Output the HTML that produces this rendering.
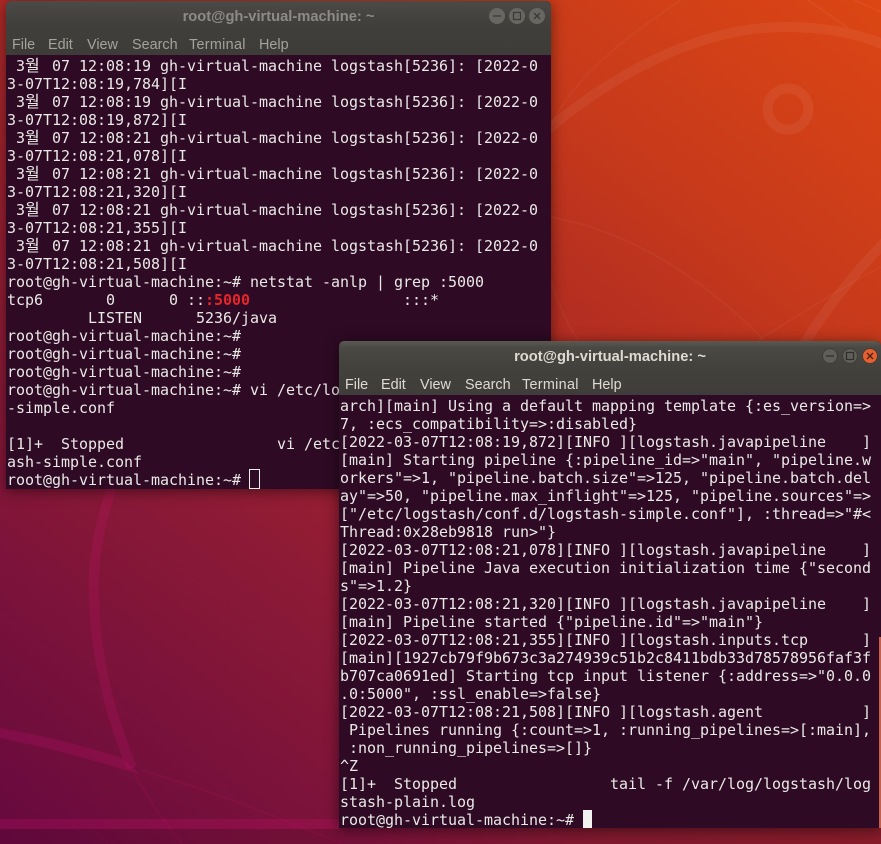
<!DOCTYPE html>
<html lang="en">
<head>
<meta charset="utf-8">
<title>Terminals</title>
<style>
html,body{margin:0;padding:0;width:881px;height:844px;overflow:hidden;background:#8a1a30}
#bg{position:absolute;left:0;top:0;width:881px;height:844px;background:linear-gradient(218deg,#dc4614 0%,#c6391b 23%,#b42e21 36%,#ae2a26 45%,#961e32 60%,#8c1a36 68%,#66093f 100%)}
#bg svg{position:absolute;left:0;top:0}
.win{position:absolute;overflow:hidden;border-radius:5px 5px 0 0;background:#2e0a24;box-shadow:0 2px 14px rgba(0,0,0,.5)}
#w1{left:6px;top:1px;width:545px;height:488px}
#w2{left:339px;top:341px;width:542px;height:487px}
.bar{position:absolute;left:0;top:0;width:100%;height:54px;background:linear-gradient(#4b4a46,#403f3b 45%,#3d3c38)}
#w2 .bar{background:linear-gradient(#5a5a52,#4a4944 12%,#43423d 45%,#3e3d39)}
.title{position:absolute;top:6px;left:0;width:100%;text-align:center;font:bold 14.7px/20px "Liberation Sans",sans-serif;color:#8c8b87;white-space:nowrap}
#w2 .title{color:#dfdbd2}
.m{position:absolute;top:35px;font:14.4px/18px "Liberation Sans",sans-serif;color:#a4a29b;white-space:nowrap}
#w2 .m{color:#dfdbd2}
.b{position:absolute;top:7px;width:16px;height:16px;border-radius:50%;background:#676661}
#w2 .b{top:7px;background:#5f5e59;box-shadow:inset 0 0 0 1px #3a3935}
#w2 .b.c{background:#e9602f}
.b svg{position:absolute;left:0;top:0}
.t{position:absolute;left:1px;font:15px/18px "DejaVu Sans Mono","Liberation Mono",monospace;letter-spacing:-.03px;color:#e9e9e6}
#w1 .t{top:56px}
#w2 .t{top:56px}
.t div{height:18px;white-space:pre}
.t i{font:normal 16px/0 "Noto Sans CJK KR",sans-serif;display:inline-block;width:18px;height:0;overflow:visible;letter-spacing:0}
.r{color:#e5252a;font-weight:bold}
</style>
</head>
<body>
<div id="bg">
<svg width="881" height="844" viewBox="0 0 881 844" fill="none">
<path d="M545 132C600 85 690 27 785 27C820 27 855 32 885 45" stroke="#fff" stroke-opacity=".055" stroke-width="10"/>
<path d="M551 127C562 100 590 60 681 0" stroke="#fff" stroke-opacity=".035" stroke-width="2"/>
<path d="M808 0L848 28" stroke="#fff" stroke-opacity=".04" stroke-width="2"/>
<path d="M854 0L881 12" stroke="#fff" stroke-opacity=".04" stroke-width="2"/>
<circle cx="788" cy="109" r="20.5" stroke="#fff" stroke-opacity=".06" stroke-width="10"/>
<path d="M885 242C855 272 825 310 804 344" stroke="#fff" stroke-opacity=".055" stroke-width="10"/>
<path d="M551 217C630 232 700 275 764 340" stroke="#fff" stroke-opacity=".035" stroke-width="2"/>
<path d="M758 340C800 315 840 288 881 267" stroke="#fff" stroke-opacity=".035" stroke-width="2"/>
<path d="M551 280C558 303 566 322 578 340" stroke="#fff" stroke-opacity=".035" stroke-width="2"/>
<path d="M112 488C97 530 92 570 94 600C96 660 110 715 132 768" stroke="#e0107a" stroke-opacity=".16" stroke-width="10"/>
<path d="M0 728C45 736 85 746 122 758L141 775C95 760 45 747 0 738Z" fill="#e0107a" fill-opacity=".18"/>
<path d="M141 770C210 790 280 818 340 843" stroke="#e0107a" stroke-opacity=".1" stroke-width="2"/>
<path d="M135 775C150 800 165 825 183 844" stroke="#e0107a" stroke-opacity=".1" stroke-width="2"/>
<rect x="0" y="819" width="881" height="10" fill="#e0107a" fill-opacity=".2"/>
<rect x="0" y="829" width="340" height="15" fill="#000" fill-opacity=".06"/>
<defs><linearGradient id="s" x1="0" x2="1" y1="0" y2="0"><stop offset="0" stop-color="#75103a"/><stop offset=".5" stop-color="#801a2e"/><stop offset="1" stop-color="#881c2a"/></linearGradient></defs>
<rect x="340" y="828" width="541" height="16" fill="url(#s)"/>
</svg>
</div>

<div id="w1" class="win">
  <div class="bar"></div>
  <div class="title">root@gh-virtual-machine: ~</div>
  <span class="m" style="left:6px">File</span>
  <span class="m" style="left:42px">Edit</span>
  <span class="m" style="left:81px">View</span>
  <span class="m" style="left:126px">Search</span>
  <span class="m" style="left:183px;letter-spacing:.3px">Terminal</span>
  <span class="m" style="left:253px">Help</span>
  <div class="b" style="left:483px"><svg width="16" height="16"><path d="M4 8H12" stroke="#3a3935" stroke-width="1.3"/></svg></div>
  <div class="b" style="left:503px"><svg width="16" height="16"><rect x="4.5" y="4.5" width="7" height="7" stroke="#3a3935" fill="none" stroke-width="1.2"/></svg></div>
  <div class="b" style="left:523px"><svg width="16" height="16"><path d="M5 5L11 11M11 5L5 11" stroke="#3a3935" stroke-width="1.3"/></svg></div>
  <div class="t">
<div> 3<i>월</i> 07 12:08:19 gh-virtual-machine logstash[5236]: [2022-0</div>
<div>3-07T12:08:19,784][I</div>
<div> 3<i>월</i> 07 12:08:19 gh-virtual-machine logstash[5236]: [2022-0</div>
<div>3-07T12:08:19,872][I</div>
<div> 3<i>월</i> 07 12:08:21 gh-virtual-machine logstash[5236]: [2022-0</div>
<div>3-07T12:08:21,078][I</div>
<div> 3<i>월</i> 07 12:08:21 gh-virtual-machine logstash[5236]: [2022-0</div>
<div>3-07T12:08:21,320][I</div>
<div> 3<i>월</i> 07 12:08:21 gh-virtual-machine logstash[5236]: [2022-0</div>
<div>3-07T12:08:21,355][I</div>
<div> 3<i>월</i> 07 12:08:21 gh-virtual-machine logstash[5236]: [2022-0</div>
<div>3-07T12:08:21,508][I</div>
<div>root@gh-virtual-machine:~# netstat -anlp | grep :5000</div>
<div>tcp6       0      0 ::<span class="r">:5000</span>                 :::*</div>
<div>         LISTEN      5236/java</div>
<div>root@gh-virtual-machine:~#</div>
<div>root@gh-virtual-machine:~#</div>
<div>root@gh-virtual-machine:~#</div>
<div>root@gh-virtual-machine:~# vi /etc/logstash/conf.d/logstash</div>
<div>-simple.conf</div>
<div> </div>
<div>[1]+  Stopped                 vi /etc/logstash/conf.d/logst</div>
<div>ash-simple.conf</div>
<div>root@gh-virtual-machine:~# </div>
  </div>
  <div style="position:absolute;left:243px;top:468px;width:9px;height:18px;border:1px solid #eee"></div>
</div>

<div id="w2" class="win">
  <div class="bar"></div>
  <div class="title">root@gh-virtual-machine: ~</div>
  <span class="m" style="left:6px">File</span>
  <span class="m" style="left:42px">Edit</span>
  <span class="m" style="left:81px">View</span>
  <span class="m" style="left:126px">Search</span>
  <span class="m" style="left:183px;letter-spacing:.3px">Terminal</span>
  <span class="m" style="left:253px">Help</span>
  <div class="b" style="left:483px"><svg width="16" height="16"><path d="M4 8H12" stroke="#2f2e2b" stroke-width="1.3"/></svg></div>
  <div class="b" style="left:503px"><svg width="16" height="16"><rect x="4.5" y="4.5" width="7" height="7" stroke="#2f2e2b" fill="none" stroke-width="1.2"/></svg></div>
  <div class="b c" style="left:523px"><svg width="16" height="16"><path d="M5 5L11 11M11 5L5 11" stroke="#4a2315" stroke-width="1.4"/></svg></div>
  <div class="t">
<div>arch][main] Using a default mapping template {:es_version=&gt;</div>
<div>7, :ecs_compatibility=&gt;:disabled}</div>
<div>[2022-03-07T12:08:19,872][INFO ][logstash.javapipeline    ]</div>
<div>[main] Starting pipeline {:pipeline_id=&gt;"main", "pipeline.w</div>
<div>orkers"=&gt;1, "pipeline.batch.size"=&gt;125, "pipeline.batch.del</div>
<div>ay"=&gt;50, "pipeline.max_inflight"=&gt;125, "pipeline.sources"=&gt;</div>
<div>["/etc/logstash/conf.d/logstash-simple.conf"], :thread=&gt;"#&lt;</div>
<div>Thread:0x28eb9818 run&gt;"}</div>
<div>[2022-03-07T12:08:21,078][INFO ][logstash.javapipeline    ]</div>
<div>[main] Pipeline Java execution initialization time {"second</div>
<div>s"=&gt;1.2}</div>
<div>[2022-03-07T12:08:21,320][INFO ][logstash.javapipeline    ]</div>
<div>[main] Pipeline started {"pipeline.id"=&gt;"main"}</div>
<div>[2022-03-07T12:08:21,355][INFO ][logstash.inputs.tcp      ]</div>
<div>[main][1927cb79f9b673c3a274939c51b2c8411bdb33d78578956faf3f</div>
<div>b707ca0691ed] Starting tcp input listener {:address=&gt;"0.0.0</div>
<div>.0:5000", :ssl_enable=&gt;false}</div>
<div>[2022-03-07T12:08:21,508][INFO ][logstash.agent           ]</div>
<div> Pipelines running {:count=&gt;1, :running_pipelines=&gt;[:main],</div>
<div> :non_running_pipelines=&gt;[]}</div>
<div>^Z</div>
<div>[1]+  Stopped                 tail -f /var/log/logstash/log</div>
<div>stash-plain.log</div>
<div>root@gh-virtual-machine:~# </div>
  </div>
  <div style="position:absolute;left:244px;top:469px;width:9px;height:18px;background:#f2f2f0"></div>
  <div style="position:absolute;left:540px;top:296px;width:2px;height:191px;background:#c4604a"></div>
</div>
</body>
</html>
